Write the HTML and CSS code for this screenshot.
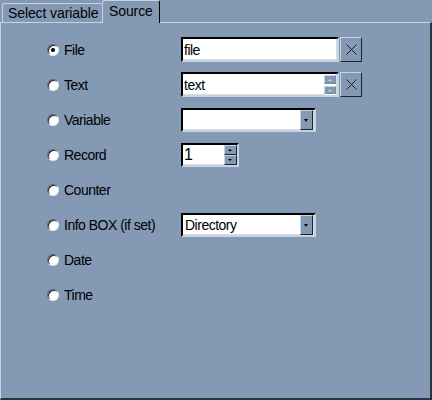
FILE: index.html
```html
<!DOCTYPE html>
<html>
<head>
<meta charset="utf-8">
<link rel="stylesheet" href="styles.css">
</head>
<body>
<div class="window">
  <div class="tabs">
    <div class="tab first">Select variable</div>
    <div class="tab active">Source</div>
  </div>
  <div class="panel">
    <div class="row">
      <label class="opt"><span class="radio checked"></span>File</label>
      <div class="ctrl"><div class="input wide">file</div><div class="xbtn"><svg width="11" height="11" viewBox="0 0 11 11"><path d="M0.5 0.5L10.5 10.5M10.5 0.5L0.5 10.5" stroke="#222" stroke-width="1" fill="none"/></svg></div></div>
    </div>
    <div class="row">
      <label class="opt"><span class="radio"></span>Text</label>
      <div class="ctrl"><div class="input wide">text<div class="spin small"><span class="sb up"></span><span class="sb down"></span></div></div><div class="xbtn"><svg width="11" height="11" viewBox="0 0 11 11"><path d="M0.5 0.5L10.5 10.5M10.5 0.5L0.5 10.5" stroke="#222" stroke-width="1" fill="none"/></svg></div></div>
    </div>
    <div class="row">
      <label class="opt"><span class="radio"></span>Variable</label>
      <div class="ctrl"><div class="input combo"><span class="val"></span><span class="drop"></span></div></div>
    </div>
    <div class="row">
      <label class="opt"><span class="radio"></span>Record</label>
      <div class="ctrl"><div class="input num">1<div class="spin"><span class="sb up"></span><span class="sb down"></span></div></div></div>
    </div>
    <div class="row">
      <label class="opt"><span class="radio"></span>Counter</label>
    </div>
    <div class="row">
      <label class="opt"><span class="radio"></span>Info BOX (if set)</label>
      <div class="ctrl"><div class="input combo"><span class="val">Directory</span><span class="drop"></span></div></div>
    </div>
    <div class="row">
      <label class="opt"><span class="radio"></span>Date</label>
    </div>
    <div class="row">
      <label class="opt"><span class="radio"></span>Time</label>
    </div>
  </div>
</div>
</body>
</html>
```
FILE: styles.css
```css
html, body {
  margin: 0;
  padding: 0;
  background: #8499b4;
}
body {
  font-family: "Liberation Sans", Arial, sans-serif;
  font-size: 14px;
  letter-spacing: -0.5px;
  color: #000;
}
.window {
  width: 432px;
  height: 400px;
  display: flex;
  flex-direction: column;
  box-sizing: border-box;
}
.tabs {
  height: 22px;
  display: flex;
  align-items: flex-end;
  padding-left: 2px;
  flex: none;
}
.tab {
  height: 19px;
  box-sizing: border-box;
  padding: 1px 0 0 5px;
  border-top: 1px solid #c6d3e3;
  border-left: 1px solid #c6d3e3;
  border-right: 1px solid #a8b8cc;
  border-radius: 3px 3px 0 0;
  line-height: 16px;
  white-space: nowrap;
  letter-spacing: -0.1px;
}
.tab.first {
  width: 101px;
}
.tab.active {
  width: 58px;
  height: 23px;
  margin-bottom: -1px;
  padding: 2px 0 0 6px;
  border-right: 1px solid #000;
  border-left: 1px solid #c6d3e3;
  background: #8499b4;
  position: relative;
  z-index: 1;
  margin-left: -1px;
}
.panel {
  flex: 1;
  border-top: 1px solid #c6d3e3;
  border-left: 1px solid #c6d3e3;
  border-right: 2px solid #2a3340;
  border-bottom: 2px solid #2a3340;
  padding: 9px 0 0 46px;
  display: flex;
  flex-direction: column;
}
.row {
  height: 35px;
  display: flex;
  align-items: center;
}
.opt {
  width: 134px;
  display: flex;
  align-items: center;
  gap: 5px;
  flex: none;
  padding-top: 1px;
}
.radio {
  width: 12px;
  height: 12px;
  box-sizing: border-box;
  border-radius: 50%;
  background: #fff;
  border: 1px solid;
  border-color: #5a6573 #e8eef5 #e8eef5 #5a6573;
  box-shadow: inset 1px 1px 0 #222;
  position: relative;
  flex: none;
  margin-top: -1px;
}
.radio.checked::after {
  content: "";
  position: absolute;
  left: 3px;
  top: 3px;
  width: 4px;
  height: 4px;
  border-radius: 50%;
  background: #000;
}
.ctrl {
  display: flex;
  align-items: center;
}
.input {
  height: 25px;
  box-sizing: border-box;
  background: #fff;
  border: 2px solid;
  border-color: #000 #c6d3e3 #c6d3e3 #000;
  box-shadow: inset -1px -1px 0 #d8dde4;
  display: flex;
  align-items: center;
  padding-left: 1px;
  position: relative;
}
.input.wide {
  width: 158px;
}
.input.combo {
  width: 135px;
  height: 24px;
  padding-right: 0;
  justify-content: space-between;
}
.input.num {
  width: 58px;
  height: 24px;
  font-size: 16px;
}
.val {
  padding-left: 1px;
}
.drop {
  width: 13px;
  height: 100%;
  box-sizing: border-box;
  background: #8499b4;
  border: 1px solid;
  border-color: #c6d3e3 #1c232c #1c232c #c6d3e3;
  position: relative;
  margin-right: 1px;
}
.drop::after {
  content: "";
  position: absolute;
  left: 3px;
  top: 8px;
  border-left: 2.5px solid transparent;
  border-right: 2.5px solid transparent;
  border-top: 3px solid #000;
}
.spin {
  position: absolute;
  right: 0;
  top: 0;
  bottom: 0;
  width: 13px;
  display: flex;
  flex-direction: column;
  background: #fff;
}
.spin.small {
  right: 1px;
  width: 12px;
}
.sb {
  flex: 1;
  box-sizing: border-box;
  background: #8499b4;
  border: 1px solid;
  border-color: #c6d3e3 #1c232c #1c232c #c6d3e3;
  position: relative;
}
.spin.small .sb {
  border-color: #c6d3e3 #7a8aa0 #7a8aa0 #c6d3e3;
  margin: 1px 0;
}
.sb.up::after, .sb.down::after {
  content: "";
  position: absolute;
  left: 3px;
  top: 3px;
  border-left: 2px solid transparent;
  border-right: 2px solid transparent;
}
.sb.up::after {
  border-bottom: 2px solid #000;
}
.sb.down::after {
  border-top: 2px solid #000;
}
.spin.small .sb.up::after { border-bottom-color: #c6d3e3; }
.spin.small .sb.down::after { border-top-color: #c6d3e3; }
.xbtn {
  width: 22px;
  height: 25px;
  box-sizing: border-box;
  margin-left: 1px;
  background: #8499b4;
  border: 1px solid;
  border-color: #c6d3e3 #1c232c #1c232c #c6d3e3;
  display: flex;
  align-items: center;
  justify-content: center;
}
```
